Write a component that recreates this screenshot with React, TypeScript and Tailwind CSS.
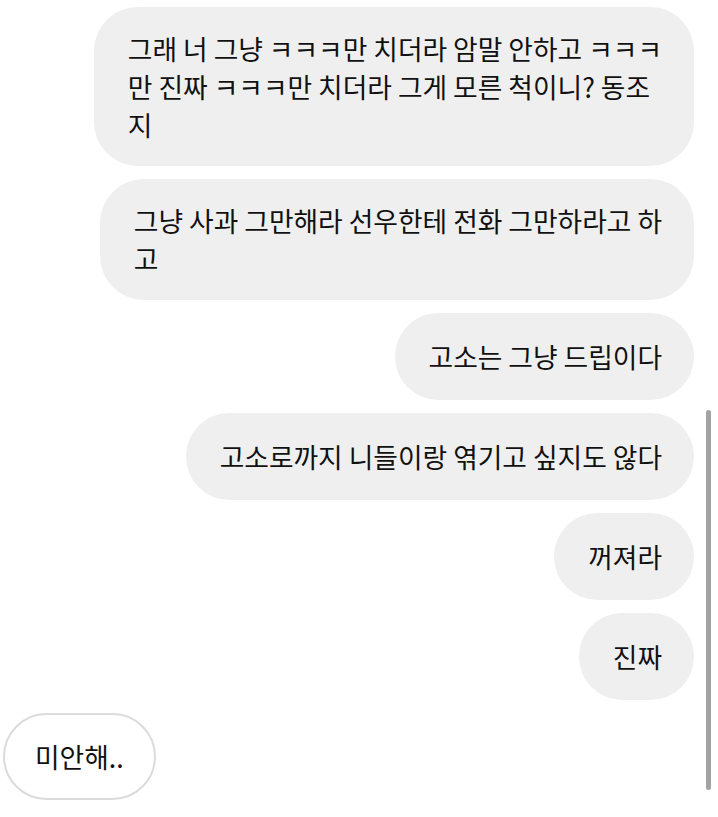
const messages: { id: number; mine: boolean; lines: string[] }[] = [
  {
    id: 1,
    mine: true,
    lines: ["그래 너 그냥 ㅋㅋㅋ만 치더라 암말 안하고 ㅋㅋㅋ", "만 진짜 ㅋㅋㅋ만 치더라 그게 모른 척이니? 동조", "지"],
  },
  { id: 2, mine: true, lines: ["그냥 사과 그만해라 선우한테 전화 그만하라고 하", "고"] },
  { id: 3, mine: true, lines: ["고소는 그냥 드립이다"] },
  { id: 4, mine: true, lines: ["고소로까지 니들이랑 엮기고 싶지도 않다"] },
  { id: 5, mine: true, lines: ["꺼져라"] },
  { id: 6, mine: true, lines: ["진짜"] },
  { id: 7, mine: false, lines: ["미안해.."] },
];

export default function App() {
  return (
    <div
      className="relative h-[817px] w-[718px] overflow-hidden bg-white text-[#111]"
      style={{ fontFamily: '"Noto Sans CJK KR", "Noto Sans", sans-serif' }}
    >
      <div className="flex flex-col gap-[13px] pt-[7px] pr-6">
        {messages.map((m) => (
          <div
            key={m.id}
            className={
              m.mine
                ? "flex min-h-[87px] flex-col justify-center self-end rounded-[44px] bg-[#efefef] pl-[34px] pr-8 py-[22.5px] text-[26.75px] leading-[38px]"
                : "ml-[3px] flex min-h-[87px] flex-col justify-center self-start rounded-[44px] border-2 border-[#dbdbdb] bg-white px-[30px] py-[20px] text-[26.75px] leading-[38px]"
            }
          >
            {m.lines.map((l, i) => (
              <div key={i} className="whitespace-nowrap">
                {l}
              </div>
            ))}
          </div>
        ))}
      </div>

      {/* overlay scrollbar */}
      <div className="absolute left-[706px] top-[410px] h-[380px] w-[5px] rounded-full bg-[#a3a3a3]" />
    </div>
  );
}
